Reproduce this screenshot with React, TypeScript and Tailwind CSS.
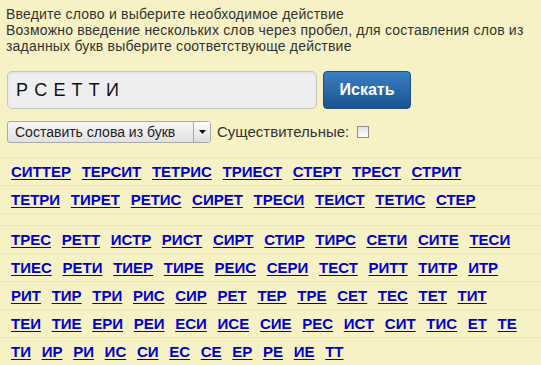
const groups: string[][][] = [
  [
    ['СИТТЕР', 'ТЕРСИТ', 'ТЕТРИС', 'ТРИЕСТ', 'СТЕРТ', 'ТРЕСТ', 'СТРИТ'],
    ['ТЕТРИ', 'ТИРЕТ', 'РЕТИС', 'СИРЕТ', 'ТРЕСИ', 'ТЕИСТ', 'ТЕТИС', 'СТЕР'],
  ],
  [
    ['ТРЕС', 'РЕТТ', 'ИСТР', 'РИСТ', 'СИРТ', 'СТИР', 'ТИРС', 'СЕТИ', 'СИТЕ', 'ТЕСИ'],
    ['ТИЕС', 'РЕТИ', 'ТИЕР', 'ТИРЕ', 'РЕИС', 'СЕРИ', 'ТЕСТ', 'РИТТ', 'ТИТР', 'ИТР'],
    ['РИТ', 'ТИР', 'ТРИ', 'РИС', 'СИР', 'РЕТ', 'ТЕР', 'ТРЕ', 'СЕТ', 'ТЕС', 'ТЕТ', 'ТИТ'],
    ['ТЕИ', 'ТИЕ', 'ЕРИ', 'РЕИ', 'ЕСИ', 'ИСЕ', 'СИЕ', 'РЕС', 'ИСТ', 'СИТ', 'ТИС', 'ЕТ', 'ТЕ'],
    ['ТИ', 'ИР', 'РИ', 'ИС', 'СИ', 'ЕС', 'СЕ', 'ЕР', 'РЕ', 'ИЕ', 'ТТ'],
  ],
]

function WordGroup({ rows, className }: { rows: string[][]; className?: string }) {
  return (
    <div className={`border-t border-[#eee8b9] ${className ?? ''}`}>
      {rows.map((row, i) => (
        <div
          key={i}
          className="flex h-[28px] items-start gap-x-[10.7px] whitespace-nowrap border-b border-[#eee8b9] pl-[11px] text-[15px] leading-[27px] font-bold"
        >
          {row.map((w) => (
            <a key={w} href="#" className="text-[#0000cc] underline underline-offset-[2px]">
              {w}
            </a>
          ))}
        </div>
      ))}
    </div>
  )
}

export default function App() {
  return (
    <div
      className="h-[365px] w-[541px] overflow-hidden bg-[#f6f2c5] pt-[6px] text-[#333]"
      style={{ fontFamily: '"Liberation Sans", Arial, sans-serif' }}
    >
      <div className="pl-[6px] text-[14px] leading-[16px] tracking-[0.2px] whitespace-nowrap">
        <div>Введите слово и выберите необходимое действие</div>
        <div>Возможно введение нескольких слов через пробел, для составления слов из</div>
        <div>заданных букв выберите соответствующе действие</div>
      </div>

      <div className="mt-[17px] flex items-start pl-[7px]">
        <input
          readOnly
          value="Р С Е Т Т И"
          className="h-[38px] w-[310px] rounded-[5px] border border-[#c6c6c6] bg-[#eeeeee] pl-[8px] text-[18px] tracking-[0.6px] text-[#111] shadow-[inset_0_1px_2px_rgba(0,0,0,0.08)] outline-none"
          style={{ fontFamily: '"Liberation Sans", Arial, sans-serif' }}
        />
        <button
          type="button"
          className="ml-[6px] h-[38px] w-[88px] rounded-[4px] border border-[#1a4f86] bg-gradient-to-b from-[#3a80c2] to-[#1a5391] text-[16px] font-bold text-white"
        >
          Искать
        </button>
      </div>

      <div className="mt-[12px] flex items-center pl-[7px]">
        <div className="flex h-[22px] w-[204px] items-stretch rounded-[3px] border border-[#a9a9a9] bg-gradient-to-b from-[#f6f6f6] to-[#e2e2e2]">
          <div className="flex flex-1 items-center pl-[7px] text-[14px] text-[#222]">
            Составить слова из букв
          </div>
          <div className="flex w-[17px] items-center justify-center border-l border-[#a9a9a9] bg-gradient-to-b from-[#ffffff] to-[#dcdcdc]">
            <svg width="7" height="4" viewBox="0 0 7 4">
              <path d="M0 0h7L3.5 4z" fill="#111" />
            </svg>
          </div>
        </div>
        <span className="ml-[6px] text-[15px] leading-[18px]">Существительные:</span>
        <span className="ml-[8px] h-[12px] w-[12px] border border-[#8e8e8e] bg-gradient-to-b from-[#e4e4e4] to-[#fbfbfb]" />
      </div>

      <WordGroup rows={groups[0]} className="mt-[14px]" />
      <WordGroup rows={groups[1]} className="mt-[11px]" />
    </div>
  )
}
